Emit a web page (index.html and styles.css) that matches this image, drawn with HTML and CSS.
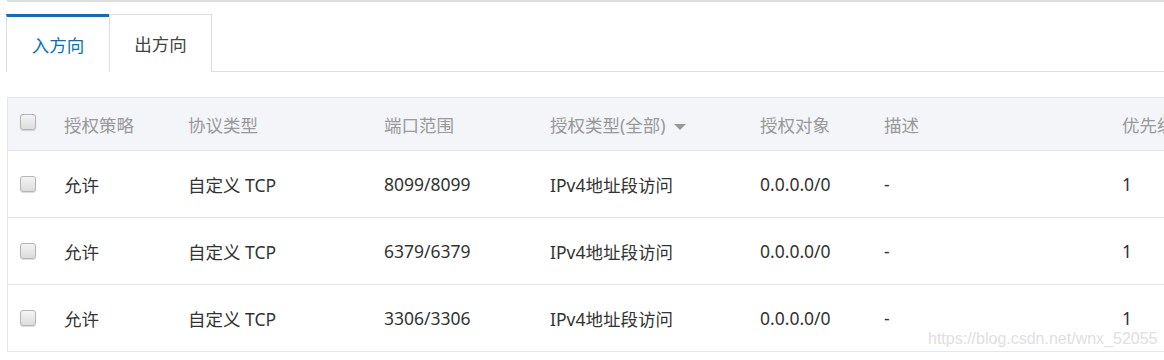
FILE: index.html
```html
<!DOCTYPE html>
<html lang="zh-CN">
<head>
    <meta charset="UTF-8">
    <title>安全组规则</title>
    <link rel="stylesheet" href="styles.css">
</head>
<body>
    <div class="page">
        <div class="top-line"></div>

        <div class="tabs">
            <div class="tab active">入方向</div>
            <div class="tab">出方向</div>
        </div>

        <div class="rule-table">
            <div class="row head">
                <div class="cell check"><span class="checkbox"></span></div>
                <div class="cell">授权策略</div>
                <div class="cell">协议类型</div>
                <div class="cell">端口范围</div>
                <div class="cell">授权类型(全部) <span class="caret"></span></div>
                <div class="cell">授权对象</div>
                <div class="cell">描述</div>
                <div class="cell">优先级</div>
            </div>
            <div class="row">
                <div class="cell check"><span class="checkbox"></span></div>
                <div class="cell">允许</div>
                <div class="cell">自定义 TCP</div>
                <div class="cell">8099/8099</div>
                <div class="cell">IPv4地址段访问</div>
                <div class="cell">0.0.0.0/0</div>
                <div class="cell">-</div>
                <div class="cell">1</div>
            </div>
            <div class="row">
                <div class="cell check"><span class="checkbox"></span></div>
                <div class="cell">允许</div>
                <div class="cell">自定义 TCP</div>
                <div class="cell">6379/6379</div>
                <div class="cell">IPv4地址段访问</div>
                <div class="cell">0.0.0.0/0</div>
                <div class="cell">-</div>
                <div class="cell">1</div>
            </div>
            <div class="row">
                <div class="cell check"><span class="checkbox"></span></div>
                <div class="cell">允许</div>
                <div class="cell">自定义 TCP</div>
                <div class="cell">3306/3306</div>
                <div class="cell">IPv4地址段访问</div>
                <div class="cell">0.0.0.0/0</div>
                <div class="cell">-</div>
                <div class="cell">1</div>
            </div>
        </div>

        <div class="watermark">https://blog.csdn.net/wnx_52055</div>
    </div>
</body>
</html>
```

FILE: styles.css
```css
:root {
    --blue: #0070cc;
    --line: #dedede;
    --row-line: #e3e6ea;
    --head-bg: #f4f5f9;
    --text: #333333;
    --muted: #999999;
}

* {
    margin: 0;
    padding: 0;
    box-sizing: border-box;
}

body {
    font-family: "Noto Sans", "Noto Sans CJK SC", sans-serif;
    font-size: 17.5px;
    color: var(--text);
    background: #ffffff;
    overflow: hidden;
    height: 360px;
}

.page {
    position: relative;
    padding-left: 7px;
    height: 360px;
}

.top-line {
    height: 2px;
    background: var(--line);
}

/* Tabs */
.tabs {
    display: flex;
    margin-top: 12px;
    height: 58px;
    border-bottom: 1px solid var(--line);
}

.tab {
    width: 103px;
    display: flex;
    align-items: center;
    justify-content: center;
    border: 1px solid var(--line);
    border-bottom: none;
    color: #444;
    margin-bottom: -1px;
    background: #fff;
}

.tab.active {
    width: 103px;
    color: var(--blue);
    border-top: 3px solid var(--blue);
    border-right: none;
    margin-left: -1px;
    padding-bottom: 1px;
}

/* Table */
.rule-table {
    margin-top: 25px;
    width: 1260px;
    border-left: 1px solid var(--row-line);
    border-top: 1px solid var(--row-line);
}

.row {
    display: grid;
    grid-template-columns: 56px 124px 196px 166px 210px 124px 238px 140px;
    height: 67px;
    align-items: center;
    border-bottom: 1px solid var(--row-line);
}

.row.head {
    height: 53px;
    background: var(--head-bg);
    color: var(--muted);
}

.cell {
    white-space: nowrap;
}

.cell.check {
    padding-left: 12px;
    display: flex;
    align-items: center;
}

.checkbox {
    width: 16px;
    height: 16px;
    border: 1px solid #b5b5b5;
    border-radius: 3px;
    background: linear-gradient(#f4f4f4, #dcdcdc);
    box-shadow: 0 1px 1px rgba(0, 0, 0, 0.15);
    display: inline-block;
}

.row.head .checkbox {
    margin-top: -4px;
}

.caret {
    display: inline-block;
    width: 0;
    height: 0;
    margin-left: 4px;
    vertical-align: middle;
    border-left: 6px solid transparent;
    border-right: 6px solid transparent;
    border-top: 6px solid #999;
}

/* Overlay text */
.watermark {
    position: absolute;
    left: 928px;
    top: 330px;
    font-family: "Liberation Sans", Arial, sans-serif;
    font-size: 16px;
    color: #e0e0e0;
}
```
